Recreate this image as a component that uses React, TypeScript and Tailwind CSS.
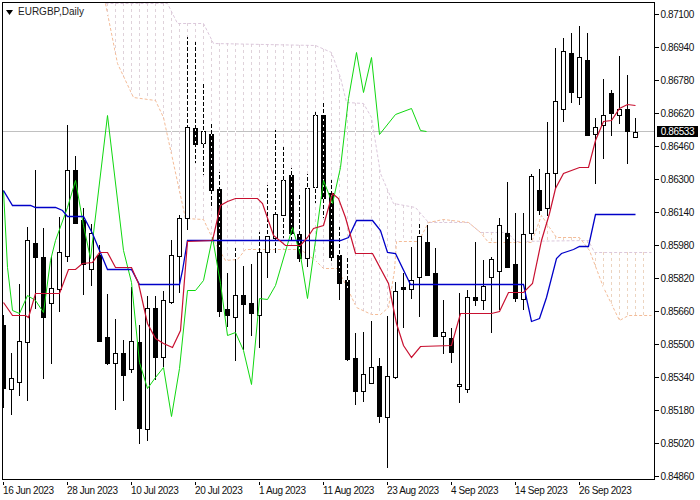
import React from 'react';

type Candle = [string, number, number, number, number];
type Pt = [number, number];

// kind, wick top, wick bottom, body top, body bottom (index gives x)
const candles: Candle[] = [
  ['b', 315, 408, 325, 388], ['w', 353, 415, 378, 389], ['w', 284, 396, 341, 382], ['w', 227, 401, 240, 342],
  ['b', 170, 309, 243, 257], ['b', 228, 379, 257, 317], ['w', 256, 364, 288, 303], ['w', 217, 312, 252, 289],
  ['w', 125, 262, 170, 256], ['b', 156, 224, 170, 223], ['b', 208, 295, 220, 264], ['w', 224, 286, 233, 269],
  ['b', 245, 341, 255, 341], ['b', 294, 365, 337, 363], ['w', 319, 410, 353, 363], ['b', 340, 401, 353, 375],
  ['w', 287, 373, 341, 369], ['b', 325, 444, 342, 428], ['w', 296, 441, 308, 429], ['b', 296, 380, 308, 357],
  ['w', 291, 367, 300, 357], ['w', 240, 304, 255, 302], ['w', 215, 293, 218, 256], ['w', 37, 230, 127, 218],
  ['b', 42, 163, 128, 144], ['w', 82, 175, 131, 143], ['b', 122, 207, 134, 190], ['b', 172, 317, 189, 311],
  ['b', 273, 327, 309, 315], ['w', 248, 361, 295, 317], ['b', 266, 350, 295, 304], ['b', 264, 336, 303, 313],
  ['w', 232, 348, 252, 315], ['w', 185, 278, 236, 252], ['w', 130, 253, 214, 238], ['w', 147, 238, 180, 215],
  ['b', 168, 243, 175, 233], ['b', 193, 262, 234, 258], ['w', 174, 267, 188, 258], ['w', 112, 203, 115, 187],
  ['b', 102, 218, 115, 198], ['b', 180, 262, 193, 257], ['b', 227, 300, 255, 283], ['b', 258, 361, 280, 359],
  ['b', 333, 405, 358, 391], ['w', 332, 402, 374, 391], ['w', 321, 383, 367, 383], ['b', 358, 423, 366, 416],
  ['w', 316, 468, 376, 417], ['w', 282, 379, 291, 377], ['b', 273, 328, 287, 289], ['w', 247, 299, 280, 289],
  ['w', 223, 317, 236, 277], ['b', 225, 275, 242, 275], ['b', 248, 337, 273, 336], ['w', 300, 354, 332, 336],
  ['b', 328, 363, 338, 352], ['w', 293, 403, 384, 386], ['w', 290, 393, 297, 389], ['b', 242, 306, 297, 300],
  ['w', 260, 310, 286, 300], ['w', 257, 333, 259, 277], ['w', 218, 310, 225, 271], ['b', 182, 267, 233, 267],
  ['b', 213, 302, 264, 298], ['w', 213, 310, 234, 299], ['w', 174, 240, 176, 233], ['b', 169, 215, 190, 210],
  ['w', 122, 216, 173, 208], ['w', 48, 188, 101, 173], ['w', 38, 122, 51, 109], ['b', 33, 103, 53, 92],
  ['w', 26, 105, 57, 97], ['b', 33, 135, 60, 135], ['w', 118, 184, 127, 134], ['w', 79, 159, 115, 125],
  ['b', 90, 136, 93, 113], ['w', 56, 124, 109, 115], ['b', 75, 164, 109, 131], ['w', 118, 137, 132, 137],
];

const kijun: Pt[] = [[3, 190], [12, 205], [30, 205], [35, 207], [55, 207], [62, 210], [67, 216], [83, 216], [92, 233], [99, 250], [107, 269], [131, 269], [139, 284], [179, 284], [182, 270], [187, 240], [340, 240], [348, 237], [356, 220], [372, 220], [380, 230], [387, 252], [395, 253], [410, 284], [523, 284], [531, 321], [539, 318], [546, 297], [556, 258], [561, 253], [573, 249], [579, 246], [588, 246], [595, 214], [635, 214]];

const tenkan: Pt[] = [[3, 302], [12, 315], [25, 315], [28, 317], [35, 293], [59, 293], [68, 269], [75, 269], [82, 263], [92, 262], [99, 252], [107, 252], [115, 267], [131, 267], [138, 283], [147, 323], [155, 338], [163, 343], [172, 347], [180, 330], [187, 241], [212, 240], [220, 205], [227, 201], [235, 198], [257, 198], [262, 203], [273, 235], [285, 245], [300, 245], [307, 237], [313, 228], [323, 225], [332, 193], [338, 198], [345, 217], [355, 253], [372, 253], [388, 283], [396, 323], [403, 345], [411, 357], [420, 346], [451, 345], [460, 313], [491, 313], [499, 311], [508, 292], [523, 292], [532, 283], [541, 240], [549, 213], [555, 188], [563, 173], [579, 167], [588, 167], [595, 140], [603, 121], [611, 120], [619, 108], [627, 104], [635, 105]];

const chikou: Pt[] = [[3, 190], [7, 267], [12, 310], [19, 313], [27, 295], [35, 300], [43, 312], [50, 260], [55, 240], [67, 207], [75, 180], [83, 225], [90, 258], [107, 115], [123, 250], [131, 282], [139, 362], [147, 388], [155, 377], [163, 367], [171, 416], [179, 368], [187, 290], [195, 290], [203, 280], [212, 237], [220, 283], [227, 335], [235, 332], [243, 350], [251, 384], [259, 298], [267, 299], [275, 285], [292, 227], [300, 255], [307, 298], [315, 240], [323, 180], [332, 203], [340, 167], [348, 98], [356, 52], [363, 92], [371, 57], [379, 134], [395, 114], [411, 108], [420, 130], [426, 131]];

const spanA: Pt[] = [[105, 3], [117, 63], [133, 97], [155, 100], [163, 117], [185, 218], [203, 219], [212, 238], [225, 260], [237, 259], [245, 249], [300, 249], [315, 260], [323, 268], [337, 268], [348, 290], [356, 307], [371, 314], [380, 314], [388, 307], [394, 270], [396, 241], [418, 241], [428, 222], [443, 219], [468, 222], [480, 232], [488, 242], [531, 242], [541, 215], [549, 227], [556, 237], [579, 237], [589, 250], [603, 287], [619, 320], [628, 315], [651, 315]];

const spanB: Pt[] = [[105, 3], [167, 3], [177, 23], [203, 23], [213, 43], [315, 45], [331, 52], [340, 77], [346, 102], [363, 103], [371, 117], [380, 173], [393, 203], [415, 207], [428, 222], [468, 222], [480, 232], [507, 232], [515, 241], [588, 240], [594, 252], [651, 252]];

const prices = ['0.87100', '0.86940', '0.86780', '0.86620', '0.86460', '0.86300', '0.86140', '0.85980', '0.85820', '0.85660', '0.85500', '0.85340', '0.85180', '0.85020', '0.84860'];
const dates = ['16 Jun 2023', '28 Jun 2023', '10 Jul 2023', '20 Jul 2023', '1 Aug 2023', '11 Aug 2023', '23 Aug 2023', '4 Sep 2023', '14 Sep 2023', '26 Sep 2023'];

const toPoints = (pts: Pt[]) => pts.map((p) => `${p[0]},${p[1]}`).join(' ');

const valueAt = (pts: Pt[], x: number) => {
  for (let k = 1; k < pts.length; k++) {
    if (x <= pts[k][0]) {
      const [x0, y0] = pts[k - 1];
      const [x1, y1] = pts[k];
      return y0 + ((y1 - y0) * (x - x0)) / (x1 - x0);
    }
  }
  return pts[pts.length - 1][1];
};

// cloud hatch: one dashed vertical per bar between the two spans
const hatch = Array.from({ length: 82 }, (_, i) => 3.5 + i * 8)
  .filter((x) => x >= 105 && x <= 651)
  .map((x) => {
    const a = valueAt(spanA, x);
    const b = valueAt(spanB, x);
    return { x, top: Math.round(Math.min(a, b)), bottom: Math.round(Math.max(a, b)) };
  });

const App: React.FC = () => {
  return (
    <div className="w-[700px] h-[500px] bg-white overflow-hidden font-['Liberation_Sans',sans-serif] text-[10px] leading-[12px] tracking-[-0.4px] text-[#111]">
      <div className="flex pl-[2px] pt-[2px]">
        <div className="relative w-[653px] h-[478px] border border-black box-border shrink-0">
          <svg width="651" height="476" viewBox="3 3 651 476" className="block">
            <line x1="3" x2="654" y1="131.5" y2="131.5" stroke="#c0c0c0" />
            {hatch.map((h) => (
              <line key={h.x} x1={h.x} x2={h.x} y1={h.top} y2={h.bottom} stroke={h.x > 480 ? '#ecd4c0' : '#dfd2da'} strokeDasharray="3 3" />
            ))}
            <g transform="translate(0.5 0.5)">
              <polyline points={toPoints(spanB)} fill="none" stroke="#dcc8dc" strokeDasharray="3 2" />
              <polyline points={toPoints(spanA)} fill="none" stroke="#f4bc98" strokeDasharray="3 2" />
            </g>
            {candles.map((c, i) => {
              const x = 3.5 + i * 8;
              return (
                <g key={i}>
                  <line x1={x} x2={x} y1={c[1]} y2={c[2]} stroke="#000" />
                  <rect x={x - 2} y={c[3] + 0.5} width="4" height={c[4] - c[3]} fill={c[0] === 'w' ? '#fff' : '#000'} stroke="#000" />
                </g>
              );
            })}
            {hatch.map((h) => (
              <line key={h.x} x1={h.x} x2={h.x} y1={h.top} y2={h.bottom} stroke="#fff" strokeDasharray="2 4" strokeDashoffset="-4" />
            ))}
            <g transform="translate(0.5 0.5)">
              <polyline points={toPoints(chikou)} fill="none" stroke="#10d810" />
              <polyline points={toPoints(kijun)} fill="none" stroke="#0000c8" strokeWidth="1.3" />
              <polyline points={toPoints(tenkan)} fill="none" stroke="#c81030" strokeWidth="1.2" />
            </g>
          </svg>
          <div className="absolute left-[3px] top-[3px] flex items-center gap-[5px] tracking-normal text-[#222]">
            <svg width="7" height="5" viewBox="0 0 7 5">
              <path d="M0 0h7L3.5 5z" fill="#000" />
            </svg>
            <span>EURGBP,Daily</span>
          </div>
        </div>
        <div className="relative flex flex-col gap-[22px] pt-[7px]">
          {prices.map((p) => (
            <div key={p} className="flex items-center h-[11px]">
              <div className="w-[4px] h-px bg-black" />
              <span className="ml-[1.5px]">{p}</span>
            </div>
          ))}
          <div className="absolute left-[2px] top-[124px] w-[41px] h-[11px] bg-black text-white flex items-center justify-center">0.86533</div>
        </div>
      </div>
      <div className="flex pl-[3px]">
        {dates.map((d) => (
          <div key={d} className="w-[64px] shrink-0">
            <div className="w-px h-[3px] bg-black" />
            <div className="whitespace-nowrap">{d}</div>
          </div>
        ))}
      </div>
    </div>
  );
};

export default App;
